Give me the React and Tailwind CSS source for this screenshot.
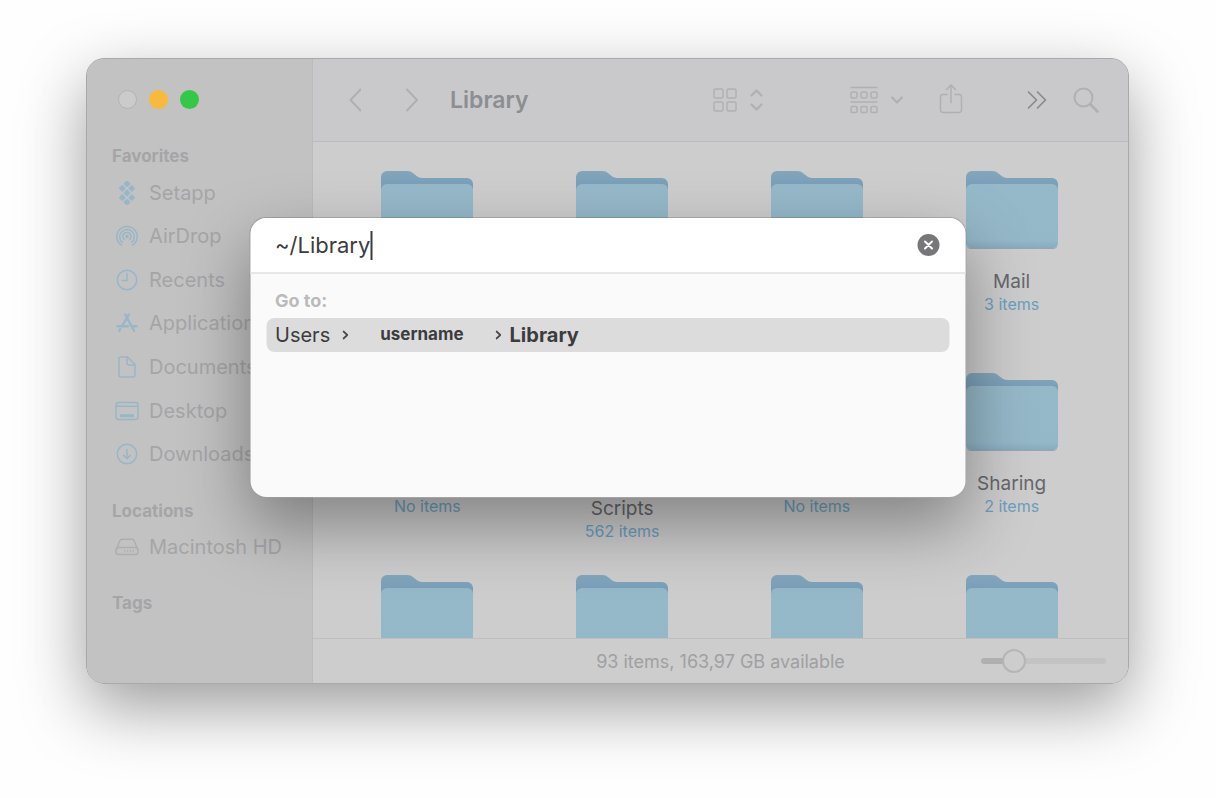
import { useState } from "react";

const sidebarItems = [
  { name: "Setapp", icon: SetappIcon },
  { name: "AirDrop", icon: AirDropIcon },
  { name: "Recents", icon: RecentsIcon },
  { name: "Applications", icon: ApplicationsIcon },
  { name: "Documents", icon: DocumentIcon },
  { name: "Desktop", icon: DesktopIcon },
  { name: "Downloads", icon: DownloadsIcon },
];

// lines: how many lines the name takes under the folder
const folders = [
  { id: 1 },
  { id: 2 },
  { id: 3 },
  { id: 4, name: "Mail", count: "3 items" },
  { id: 5, count: "No items" },
  { id: 6, name: "Scripts", count: "562 items", lines: 2 },
  { id: 7, count: "No items" },
  { id: 8, name: "Sharing", count: "2 items" },
  { id: 9 },
  { id: 10 },
  { id: 11 },
  { id: 12 },
];

function Icon({ children, className, w = 24, h = 24 }) {
  return (
    <svg
      width={w}
      height={h}
      viewBox={`0 0 ${w} ${h}`}
      fill="none"
      stroke="currentColor"
      strokeWidth="1.5"
      strokeLinecap="round"
      strokeLinejoin="round"
      className={className}
      aria-hidden="true"
    >
      {children}
    </svg>
  );
}

function SetappIcon() {
  const dots = [
    [12, 2.8],
    [7.3, 7.4],
    [16.7, 7.4],
    [12, 12],
    [7.3, 16.6],
    [16.7, 16.6],
    [12, 21.2],
  ];
  return (
    <Icon>
      {dots.map(([x, y]) => (
        <rect
          key={`${x}-${y}`}
          x={x - 2.6}
          y={y - 2.6}
          width="5.2"
          height="5.2"
          rx="1"
          fill="currentColor"
          stroke="none"
          transform={`rotate(45 ${x} ${y})`}
        />
      ))}
    </Icon>
  );
}

function AirDropIcon() {
  return (
    <Icon>
      <circle cx="12" cy="12.5" r="1.8" fill="currentColor" stroke="none" />
      <path d="M9.2 15.500a4.100 4.100 0 1 1 5.600 0" />
      <path d="M7.400 18.500a7.300 7.300 0 1 1 9.200 0" />
      <path d="M6.500 21.200a10.200 10.200 0 1 1 11 0" />
    </Icon>
  );
}

function RecentsIcon() {
  return (
    <Icon>
      <circle cx="12" cy="12" r="9.7" />
      <path d="M12 5.5V12.5H7" />
    </Icon>
  );
}

function ApplicationsIcon() {
  return (
    <Icon>
      <path
        d="M13.8 3.5 7.2 15M10.2 3.5 17.8 17.5l1.2 2.2M2.5 15.3H13.2M17.3 15.3h4.2M5.2 18.2l-1 1.8"
        strokeWidth="2.4"
      />
    </Icon>
  );
}

function DocumentIcon() {
  return (
    <Icon>
      <path d="M6 2h6.5L20 9.500V20a2 2 0 0 1-2 2H6a2 2 0 0 1-2-2V4a2 2 0 0 1 2-2Z" />
      <path d="M12 2.500V8a2 2 0 0 0 2 2h5.500" />
    </Icon>
  );
}

function DesktopIcon() {
  return (
    <Icon>
      <rect x="1" y="3.500" width="22" height="17" rx="2.500" />
      <path d="M1.500 7.200h21" />
      <path d="M5 16.700h14" strokeWidth="3" strokeLinecap="butt" />
    </Icon>
  );
}

function DownloadsIcon() {
  return (
    <Icon>
      <circle cx="12" cy="12" r="9.700" />
      <path d="M12 7.500v9M8.700 13.400l3.300 3.300 3.300-3.300" />
    </Icon>
  );
}

function DiskIcon() {
  return (
    <Icon className="text-[#aeaeb0]">
      <path d="m1.500 14 3.300-8.200A2.500 2.500 0 0 1 7 4.300h10a2.500 2.500 0 0 1 2.200 1.500L22.500 14" />
      <rect x="1" y="12.500" width="22" height="7" rx="2.800" />
      <path d="M10 15.200v1.600M12.700 15.200v1.600M15.400 15.200v1.600M18.100 15.200v1.600" strokeWidth="1" />
    </Icon>
  );
}

function Folder() {
  return (
    <svg width="94" height="80" viewBox="0 0 94 80" aria-hidden="true">
      <defs>
        <linearGradient id="folderBack" x1="0" y1="0" x2="0" y2="1">
          <stop offset="0" stopColor="#84a6bc" />
          <stop offset="0.2" stopColor="#7a9fba" />
        </linearGradient>
        <linearGradient id="folderFront" x1="0" y1="0" x2="0" y2="1">
          <stop offset="0" stopColor="#96b9c9" />
          <stop offset="0.88" stopColor="#95b8c9" />
          <stop offset="0.94" stopColor="#8fb1c5" />
          <stop offset="1" stopColor="#88abc1" />
        </linearGradient>
      </defs>
      <path
        d="M1 74V7a6 6 0 0 1 6-6h20c3 0 4.500.8 6.500 2.500l3.500 2.800c1.500 1.200 3 1.700 5 1.700h45a6 6 0 0 1 6 6v60Z"
        fill="url(#folderBack)"
      />
      <path d="M1 20a6 6 0 0 1 6-6h80a6 6 0 0 1 6 6v53a5 5 0 0 1-5 5H6a5 5 0 0 1-5-5Z" fill="url(#folderFront)" />
      <path d="M2 76.500a5 5 0 0 0 4 2h82a5 5 0 0 0 4-2" fill="none" stroke="#9aa6ad" strokeWidth="1" />
    </svg>
  );
}

function Sidebar() {
  return (
    <aside className="w-[226px] shrink-0 border-r border-[#bbbbbc] bg-[#c2c2c2] pl-[25px] text-[#a5a5a7]">
      <div className="flex h-[81px] items-center gap-3 pl-[6px]">
        <button aria-label="Close" className="size-[19px] rounded-full border border-[#b3b3b3] bg-[#cbcbcb]" />
        <button aria-label="Minimize" className="size-[19px] rounded-full bg-[#f8ba3c]" />
        <button aria-label="Zoom" className="size-[19px] rounded-full bg-[#35c748]" />
      </div>

      <h2 className="mt-[7px] mb-[6px] text-[17px] leading-[18px] font-bold">Favorites</h2>
      <ul className="grid h-[305px] grid-rows-7">
        {sidebarItems.map(({ name, icon: ItemIcon }) => (
          <li key={name} className="flex items-center gap-[10px] pl-[3px] text-[20px]">
            <span className="text-[#99b6c6]">
              <ItemIcon />
            </span>
            <a href="#">{name}</a>
          </li>
        ))}
      </ul>

      <h2 className="mt-[26px] mb-[5px] text-[17px] leading-[18px] font-bold">Locations</h2>
      <a href="#" className="flex h-[43px] items-center gap-[10px] pl-[3px] text-[20px] whitespace-nowrap">
        <DiskIcon />
        Macintosh HD
      </a>

      <h2 className="mt-[26px] text-[17px] leading-[18px] font-bold">Tags</h2>
    </aside>
  );
}

function Toolbar() {
  return (
    <header className="flex h-[83px] shrink-0 items-center border-b border-[#bcbcbd] bg-[#c9c9cb] pr-[29px] pl-9 text-[#b0b0b2]">
      <div className="flex gap-[45px]">
        <button aria-label="Back">
          <Icon w={12} h={24}>
            <path d="M11.500 1.500 1.500 12l10 10.500" strokeWidth="2" />
          </Icon>
        </button>
        <button aria-label="Forward">
          <Icon w={12} h={24}>
            <path d="M1 1.500 11 12 1 22.500" strokeWidth="2" />
          </Icon>
        </button>
      </div>
      <h1 className="ml-8 text-[23px] font-semibold text-[#8c8e92]">Library</h1>

      <div className="ml-auto flex items-center">
        <button aria-label="View" className="mr-[87px] flex items-center gap-[13px]">
          <Icon>
            <rect x="1" y="1" width="9" height="9" rx="1.500" />
            <rect x="14" y="1" width="9" height="9" rx="1.500" />
            <rect x="1" y="14" width="9" height="9" rx="1.500" />
            <rect x="14" y="14" width="9" height="9" rx="1.500" />
          </Icon>
          <Icon w={13} h={24}>
            <path d="m1.500 7.500 5-5 5 5M1.500 16.500l5 5 5-5" strokeWidth="2.200" />
          </Icon>
        </button>
        <button aria-label="Group" className="mr-9 flex items-center gap-[13px]">
          <Icon w={28} h={28}>
            <path d="M1 1.500h26M1 16h26" />
            <rect x="1" y="6" width="6" height="6" rx="1.200" />
            <rect x="11" y="6" width="6" height="6" rx="1.200" />
            <rect x="21" y="6" width="6" height="6" rx="1.200" />
            <rect x="1" y="20.500" width="6" height="6" rx="1.200" />
            <rect x="11" y="20.500" width="6" height="6" rx="1.200" />
            <rect x="21" y="20.500" width="6" height="6" rx="1.200" />
          </Icon>
          <Icon w={12} h={12}>
            <path d="m1.200 3.500 4.800 5 4.800-5" strokeWidth="2.200" />
          </Icon>
        </button>
        <button aria-label="Share" className="mr-16">
          <Icon w={24} h={32}>
            <path d="M8 10.500H4A2.500 2.500 0 0 0 1.500 13v13A2.500 2.500 0 0 0 4 28.500h16a2.500 2.500 0 0 0 2.500-2.500V13a2.500 2.500 0 0 0-2.500-2.500h-4" />
            <path d="M12 18.500V1.500M7.500 5.500 12 1l4.500 4.500" />
          </Icon>
        </button>
        <button aria-label="More" className="mr-[26px] text-[#8b8b8d]">
          <Icon w={20} h={20}>
            <path d="m1.500 2 8 8-8 8M10.500 2l8 8-8 8" strokeWidth="1.700" />
          </Icon>
        </button>
        <button aria-label="Search">
          <Icon w={26} h={26}>
            <circle cx="10.500" cy="10.500" r="9" strokeWidth="2" />
            <path d="m17.500 17.500 7 7" strokeWidth="2.600" />
          </Icon>
        </button>
      </div>
    </header>
  );
}

function FolderGrid() {
  return (
    <div className="grid min-h-0 flex-1 auto-rows-[202px] grid-cols-4 overflow-hidden pt-[28px] pr-[19px] pl-[17px]">
      {folders.map((folder) => (
        <div key={folder.id} className="flex flex-col items-center">
          <Folder />
          <p
            className={`mt-[19px] flex shrink-0 items-end text-[19px] leading-[25px] text-[#67676b] ${
              folder.lines === 2 ? "h-[50px]" : "h-[25px]"
            }`}
          >
            {folder.name}
          </p>
          <p className="text-[16px] leading-[21px] text-[#6c9fbf]">{folder.count}</p>
        </div>
      ))}
    </div>
  );
}

function StatusBar() {
  const [size, setSize] = useState(21);
  return (
    <footer className="grid h-[45px] shrink-0 grid-cols-[1fr_auto_1fr] items-center border-t border-[#bfbfc0] bg-[#cdcdcd] px-[22px]">
      <p className="col-start-2 text-[18px] text-[#a0a0a2]">93 items, 163,97 GB available</p>
      <input
        type="range"
        aria-label="Icon size"
        value={size}
        onChange={(e) => setSize(Number(e.target.value))}
        className="h-6 w-[125px] appearance-none justify-self-end bg-transparent [&::-webkit-slider-runnable-track]:h-[6px] [&::-webkit-slider-runnable-track]:rounded-full [&::-webkit-slider-runnable-track]:bg-linear-to-r [&::-webkit-slider-runnable-track]:from-[#b0b0b0] [&::-webkit-slider-runnable-track]:from-25% [&::-webkit-slider-runnable-track]:to-[#c3c3c3] [&::-webkit-slider-runnable-track]:to-25% [&::-webkit-slider-thumb]:-mt-[9px] [&::-webkit-slider-thumb]:size-6 [&::-webkit-slider-thumb]:appearance-none [&::-webkit-slider-thumb]:rounded-full [&::-webkit-slider-thumb]:border-2 [&::-webkit-slider-thumb]:border-[#b5b5b6] [&::-webkit-slider-thumb]:bg-[#cdcdcd]"
      />
    </footer>
  );
}

function Crumb() {
  return (
    <Icon w={6} h={10} className="text-[#4a4a4c]">
      <path d="m1 1.500 3.800 3.500L1 8.500" strokeWidth="1.700" />
    </Icon>
  );
}

// Go to Folder panel, floats over the window
function GoToFolder() {
  const [path, setPath] = useState("~/Library");
  return (
    <div
      role="dialog"
      aria-label="Go to Folder"
      className="absolute top-[159px] left-1/2 h-[281px] w-[717px] -translate-x-1/2 overflow-hidden rounded-[17px] border border-black/20 bg-[#fafafa] bg-clip-padding text-[#3c3c3e]"
    >
      <div className="flex h-[56px] items-center border-b-2 border-[#e7e7e7] bg-white pr-[26px] pl-[25px]">
        <input
          aria-label="Folder path"
          value={path}
          onChange={(e) => setPath(e.target.value)}
          className="field-sizing-content text-[22px] leading-[30px] caret-transparent outline-none"
        />
        <span className="h-[29px] w-[2px] bg-[#3c3c3e]" />
        <button
          aria-label="Clear"
          onClick={() => setPath("")}
          className="ml-auto flex size-[22px] items-center justify-center rounded-full bg-[#77777a] text-white"
        >
          <Icon w={10} h={10}>
            <path d="m1.500 1.500 7 7M8.500 1.500l-7 7" strokeWidth="2" />
          </Icon>
        </button>
      </div>

      <div className="px-[16px] pt-[16px]">
        <p className="pl-[9px] text-[18px] leading-[22px] font-bold text-[#bababa]">Go to:</p>
        <button className="mt-[6px] flex h-[34px] w-full items-center rounded-lg bg-[#dcdcdc] pl-[9px] text-[20px]">
          <span className="mr-3">Users</span>
          <Crumb />
          <span className="mx-8 text-[17px] font-bold">username</span>
          <Crumb />
          <span className="ml-2 font-bold">Library</span>
        </button>
      </div>
    </div>
  );
}

export default function App() {
  return (
    <div className="flex h-screen overflow-hidden bg-[#fefefe] pt-[58px] pr-[87px] pb-[114px] pl-[86px] font-[Inter,sans-serif]">
      <div className="relative flex min-w-0 flex-1 rounded-[18px] shadow-[0_24px_66px_rgba(0,0,0,0.39)]">
        <div className="relative flex min-w-0 flex-1 overflow-hidden rounded-[18px] border border-[#a9a9a9] bg-[#cdcdcd]">
          <Sidebar />
          <main className="flex min-w-0 flex-1 flex-col">
            <Toolbar />
            <FolderGrid />
            <StatusBar />
          </main>
          {/* shadow of the panel, cut off at the window's edge */}
          <div className="pointer-events-none absolute top-[158px] left-1/2 h-[281px] w-[717px] -translate-x-1/2 rounded-[17px] shadow-[0_28px_66px_rgba(0,0,0,0.36)]" />
        </div>
        <GoToFolder />
      </div>
    </div>
  );
}
